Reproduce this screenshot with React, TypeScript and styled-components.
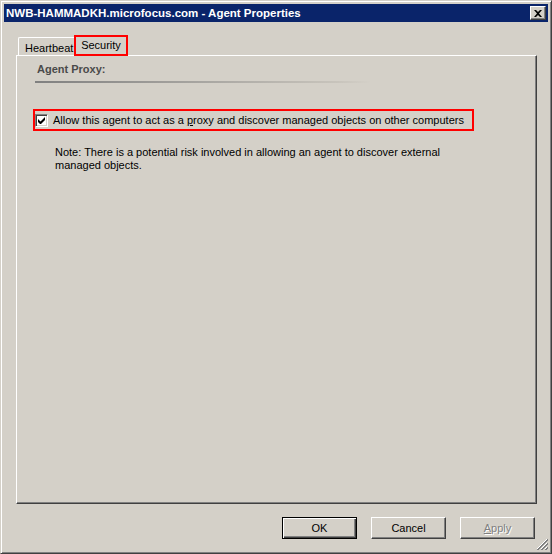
import React from "react";
import styled, { createGlobalStyle } from "styled-components";

const GlobalStyle = createGlobalStyle`
  html, body {
    margin: 0;
    padding: 0;
    background: #d4d0c8;
  }
  body {
    width: 552px;
    height: 554px;
    overflow: hidden;
    font-family: "Liberation Sans", Arial, sans-serif;
    font-size: 11px;
    color: #000;
  }
  * { box-sizing: border-box; }
`;

const Window = styled.div`
  position: relative;
  width: 552px;
  height: 554px;
  display: flex;
  flex-direction: column;
  background: #d4d0c8;
  border: 1px solid;
  border-color: #d4d0c8 #404040 #404040 #d4d0c8;
  box-shadow: inset 1px 1px #ffffff, inset -1px -1px #808080;
  padding: 3px;
`;

const TitleBar = styled.div`
  height: 18px;
  background: #0a246a;
  display: flex;
  align-items: center;
  justify-content: space-between;
  padding: 0 2px 0 2px;
`;

const TitleText = styled.span`
  color: #fff;
  font-weight: bold;
  font-size: 11.5px;
  line-height: 18px;
  white-space: nowrap;
`;

const CloseButton = styled.div`
  width: 16px;
  height: 14px;
  background: #d4d0c8;
  border: 1px solid;
  border-color: #fff #404040 #404040 #fff;
  box-shadow: inset -1px -1px #808080;
  display: flex;
  align-items: center;
  justify-content: center;
`;

const Body = styled.div`
  flex: 1;
  display: flex;
  flex-direction: column;
  padding: 13px 11px 0 12px;
`;

const TabStrip = styled.div`
  height: 20px;
  display: flex;
  align-items: flex-end;
  padding-left: 2px;
`;

const Tab = styled.div<{ $active?: boolean }>`
  position: relative;
  display: flex;
  align-items: center;
  justify-content: center;
  white-space: nowrap;
  background: #d4d0c8;
  ${(p) =>
    p.$active
      ? `
    z-index: 1;
    height: 21px;
    width: 54px;
    margin-left: -2px;
    margin-bottom: -1px;
    border: 2px solid #ff0000;
    padding-bottom: 2px;
  `
      : `
    height: 18px;
    width: 58px;
    justify-content: flex-start;
    padding-left: 6px;
    padding-top: 2px;
    border-top: 1px solid #fff;
    border-left: 1px solid #fff;
    border-top-left-radius: 2px;
  `}
`;

const Panel = styled.div`
  flex: 1;
  border: 1px solid;
  border-color: #fff #404040 #404040 #fff;
  box-shadow: inset -1px -1px #808080;
  padding: 7px 0 0 20px;
  display: flex;
  flex-direction: column;
  align-items: flex-start;
`;

const SectionTitle = styled.div`
  font-weight: bold;
  color: #4a4a4a;
  line-height: 13px;
`;

const Groove = styled.div`
  margin-top: 5px;
  margin-left: -2px;
  width: 336px;
  height: 2px;
  background: linear-gradient(to right, #808080, #c8c4bc 90%, #d4d0c8);
`;

const HighlightRow = styled.label`
  margin-top: 26px;
  margin-left: -4px;
  height: 22px;
  border: 2px solid #ff0000;
  display: flex;
  align-items: center;
  gap: 5px;
  padding: 0 8px 0 0;
  white-space: nowrap;
`;

const CheckBox = styled.span`
  width: 13px;
  height: 13px;
  background: #fff;
  border: 1px solid;
  border-color: #808080 #fff #fff #808080;
  box-shadow: inset 1px 1px #404040, inset -1px -1px #d4d0c8;
  display: flex;
  align-items: center;
  justify-content: center;
`;

const Note = styled.p`
  margin: 15px 0 0 18px;
  width: 400px;
  line-height: 13px;
`;

const Footer = styled.div`
  display: flex;
  justify-content: flex-end;
  gap: 14px;
  padding: 13px 13px 11px 0;
`;

const Button = styled.div<{ $default?: boolean; $disabled?: boolean }>`
  width: 75px;
  height: 22px;
  display: flex;
  align-items: center;
  justify-content: center;
  background: #d4d0c8;
  border: 1px solid;
  border-color: ${(p) => (p.$default ? "#000" : "#fff #404040 #404040 #fff")};
  box-shadow: ${(p) =>
    p.$default
      ? "inset 1px 1px #fff, inset -1px -1px #404040, inset -2px -2px #808080"
      : "inset -1px -1px #808080"};
  color: ${(p) => (p.$disabled ? "#808080" : "#000")};
  text-shadow: ${(p) => (p.$disabled ? "1px 1px #fff" : "none")};
`;

const Grip = styled.svg`
  position: absolute;
  right: 3px;
  bottom: 3px;
`;

export default function App() {
  return (
    <>
      <GlobalStyle />
      <Window>
        <TitleBar>
          <TitleText>NWB-HAMMADKH.microfocus.com - Agent Properties</TitleText>
          <CloseButton>
            <svg width="8" height="7" viewBox="0 0 8 7">
              <path d="M0 0h2l2 2 2-2h2L5 3.5 8 7H6L4 5 2 7H0l3-3.5z" fill="#000" />
            </svg>
          </CloseButton>
        </TitleBar>
        <Body>
          <TabStrip>
            <Tab>Heartbeat</Tab>
            <Tab $active>Security</Tab>
          </TabStrip>
          <Panel>
            <SectionTitle>Agent Proxy:</SectionTitle>
            <Groove />
            <HighlightRow>
              <CheckBox>
                <svg width="7" height="7" viewBox="0 0 7 7">
                  <path d="M0 2v3l2 2h1l4-4V0L2.5 4.5z" fill="#000" />
                </svg>
              </CheckBox>
              <span>
                Allow this agent to act as a <u>p</u>roxy and discover managed objects on other computers
              </span>
            </HighlightRow>
            <Note>
              Note: There is a potential risk involved in allowing an agent to discover external managed objects.
            </Note>
          </Panel>
        </Body>
        <Footer>
          <Button $default>OK</Button>
          <Button>Cancel</Button>
          <Button $disabled>
            <span>
              <u>A</u>pply
            </span>
          </Button>
        </Footer>
        <Grip width="12" height="12" viewBox="0 0 12 12">
          <path d="M11 1L1 11M11 5L5 11M11 9L9 11" stroke="#fff" strokeWidth="1" />
          <path d="M12 1L1 12M12 2L2 12M12 5L5 12M12 6L6 12M12 9L9 12M12 10L10 12" stroke="#808080" strokeWidth="1" />
        </Grip>
      </Window>
    </>
  );
}
